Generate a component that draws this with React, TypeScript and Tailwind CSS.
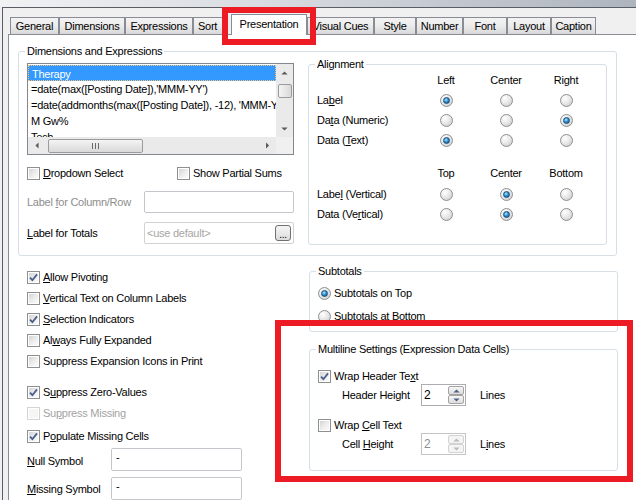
import React from 'react';

const grp = 'border-[#d5dfe5]';

function CheckBox({ checked = false, disabled = false }: { checked?: boolean; disabled?: boolean }) {
  return (
    <span
      className={`relative flex h-[13px] w-[13px] shrink-0 items-center justify-center border bg-white p-px ${
        disabled ? 'border-[#d4d4d4]' : 'border-[#8e8f8f]'
      }`}
    >
      <span
        className={`block h-full w-full ${
          disabled ? 'bg-[#f6f6f6]' : 'bg-gradient-to-br from-[#d4d4d4] via-[#ececec] to-[#fbfbfb]'
        }`}
      />
      {checked && (
        <svg viewBox="0 0 11 11" className="absolute left-0 top-0 h-[11px] w-[11px]">
          <path d="M2 5.6 L4.4 8.2 L9 2.4" fill="none" stroke="#4b5d8f" strokeWidth="1.8" />
        </svg>
      )}
    </span>
  );
}

function Radio({ on = false }: { on?: boolean }) {
  return (
    <span className="flex h-[13px] w-[13px] shrink-0 items-center justify-center rounded-full border border-[#8e8f8f] bg-[radial-gradient(circle_at_35%_30%,#ffffff,#e9e9e9_45%,#c6c6c6)]">
      {on && (
        <span className="h-[7px] w-[7px] rounded-full border border-[#1b4b78] bg-[radial-gradient(circle_at_40%_35%,#b4ecff,#2d93d8_45%,#0a4a80)]" />
      )}
    </span>
  );
}

function CheckRow({
  children,
  checked,
  disabled,
  className = '',
}: {
  children: React.ReactNode;
  checked?: boolean;
  disabled?: boolean;
  className?: string;
}) {
  return (
    <div className={`flex items-center gap-[3px] ${className}`}>
      <CheckBox checked={checked} disabled={disabled} />
      <span className={disabled ? 'text-[#a3a3a3]' : ''}>{children}</span>
    </div>
  );
}

function Arrow({ dir, color = '#5a5a5a' }: { dir: 'up' | 'down' | 'left' | 'right'; color?: string }) {
  const d = {
    up: 'M0 4 L3.5 0.5 L7 4 Z',
    down: 'M0 0.5 L3.5 4 L7 0.5 Z',
    left: 'M4 0 L0.5 3.5 L4 7 Z',
    right: 'M0 0 L3.5 3.5 L0 7 Z',
  }[dir];
  const vert = dir === 'up' || dir === 'down';
  return (
    <svg viewBox={vert ? '0 0 7 4.5' : '0 0 4.5 7'} className={vert ? 'h-[4px] w-[7px]' : 'h-[7px] w-[4px]'}>
      <path d={d} fill={color} />
    </svg>
  );
}

function Spin({ disabled = false }: { disabled?: boolean }) {
  const btn = `flex flex-1 items-center justify-center rounded-[2px] border ${
    disabled ? 'border-[#d2d2d2] bg-[#f4f4f4]' : 'border-[#a3a3a3] bg-gradient-to-b from-[#f7f7f7] to-[#dcdcdc]'
  }`;
  const c = disabled ? '#b9b9b9' : '#4d6185';
  return (
    <div className={`flex h-[22px] w-[45px] border bg-white ${disabled ? 'border-[#c4c4c4]' : 'border-[#abadb3]'}`}>
      <span className={`flex-1 pl-[2px] text-[12px] leading-[20px] ${disabled ? 'text-[#8d8d8d]' : ''}`}>2</span>
      <div className="flex w-[17px] flex-col py-px pr-px">
        <div className={btn}>
          <Arrow dir="up" color={c} />
        </div>
        <div className={btn}>
          <Arrow dir="down" color={c} />
        </div>
      </div>
    </div>
  );
}

function ListBox() {
  const rows = [
    'Therapy',
    "=date(max([Posting Date]),'MMM-YY')",
    "=date(addmonths(max([Posting Date]), -12), 'MMM-YY')",
    'M Gw%',
    'Tech',
  ];
  return (
    <div className="mt-[5px] flex h-[92px] w-[267px] flex-col border border-[#828790] bg-white">
      <div className="flex h-[73px]">
        <div className="w-[248px] overflow-hidden pt-px">
          {rows.map((r, i) => (
            <div
              key={r}
              className={`h-[16px] whitespace-nowrap pl-[3px] leading-[16px] ${
                i === 0 ? 'border border-dotted border-[#f3c77f] bg-[#3399ff] pl-[2px] leading-[14px] text-white' : ''
              }`}
            >
              {r}
            </div>
          ))}
        </div>
        <div className="flex w-[17px] flex-col items-center bg-[#eaeaea]">
          <div className="flex h-[17px] w-full items-center justify-center">
            <Arrow dir="up" />
          </div>
          <div className="mt-[3px] h-[14px] w-[14px] rounded-[2px] border border-[#9b9b9b] bg-gradient-to-r from-[#f4f4f4] to-[#d9d9d9]" />
          <div className="flex-1" />
          <div className="flex h-[17px] w-full items-center justify-center">
            <Arrow dir="down" />
          </div>
        </div>
      </div>
      <div className="flex h-[17px]">
        <div className="flex w-[248px] items-center bg-[#eaeaea]">
          <div className="flex h-full w-[17px] items-center justify-center">
            <Arrow dir="left" />
          </div>
          <div className="ml-[3px] flex h-[14px] w-[95px] items-center justify-center gap-[2px] rounded-[2px] border border-[#9b9b9b] bg-gradient-to-b from-[#f4f4f4] to-[#d9d9d9]">
            <span className="h-[6px] w-px bg-[#6b6b6b]" />
            <span className="h-[6px] w-px bg-[#6b6b6b]" />
            <span className="h-[6px] w-px bg-[#6b6b6b]" />
          </div>
          <div className="flex-1" />
          <div className="flex h-full w-[17px] items-center justify-center">
            <Arrow dir="right" />
          </div>
        </div>
        <div className="w-[17px] bg-[#f0f0f0]" />
      </div>
    </div>
  );
}

const alignCols = 'grid grid-cols-[99px_60px_60px_60px] items-center';

function AlignRow({ label, sel }: { label: React.ReactNode; sel: number }) {
  return (
    <div className={`${alignCols} h-[20px]`}>
      <span>{label}</span>
      {[0, 1, 2].map((i) => (
        <span key={i} className="justify-self-center">
          <Radio on={i === sel} />
        </span>
      ))}
    </div>
  );
}

const tabs = [
  { label: 'General', w: 'w-[49px] justify-center' },
  { label: 'Dimensions', w: 'w-[66px] justify-center' },
  { label: 'Expressions', w: 'w-[68px] justify-center' },
  { label: 'Sort', w: 'w-[34px] justify-start pl-[4px]' },
  { label: 'Presentation', w: 'ml-[4px] w-[76px] justify-center', active: true },
  { label: 'Visual Cues', w: 'w-[67px] justify-center' },
  { label: 'Style', w: 'w-[42px] justify-center' },
  { label: 'Number', w: 'w-[47px] justify-center' },
  { label: 'Font', w: 'w-[44px] justify-center' },
  { label: 'Layout', w: 'w-[44px] justify-center' },
  { label: 'Caption', w: 'w-[45px] justify-center' },
];

export default function App() {
  return (
    <div className="relative h-[500px] w-[636px] overflow-hidden bg-[#eef0f3] font-['Liberation_Sans',Arial,sans-serif] text-[11px] tracking-[-0.25px] text-black">
      <div className="h-[7px] bg-gradient-to-r from-[#f1f2f4] via-[#d3d7dd] to-[#aeb4be]" />
      <div className="ml-[2px] flex h-[493px] flex-col border-l border-t border-[#5a5d63] bg-[#f0f0f0] pl-[5px]">
        {/* tab strip */}
        <div className="flex h-[27px] items-end pl-[2px]">
          {tabs.map((t) =>
            t.active ? (
              <div
                key={t.label}
                className={`relative z-10 -mb-px flex h-[21px] ${t.w} items-center border border-b-0 border-[#898c95] bg-white pb-[2px]`}
              >
                {t.label}
              </div>
            ) : (
              <div
                key={t.label}
                className={`flex h-[17px] ${t.w} items-center border border-b-0 border-[#898c95] bg-gradient-to-b from-[#f3f3f3] via-[#ebebeb] to-[#d8d8d8]`}
              >
                {t.label}
              </div>
            ),
          )}
        </div>

        {/* panel */}
        <div className="flex-1 border-l border-t border-[#898c95] bg-white">
          <fieldset className={`ml-[9px] mt-[10px] w-[599px] rounded-[3px] border ${grp}`}>
            <legend className="ml-[6px] px-[2px] leading-[13px]">Dimensions and Expressions</legend>
            <div className="flex items-start pb-[10px] pl-[8px]">
              {/* left column */}
              <div className="w-[267px]">
                <ListBox />
                <div className="mt-[10px] flex h-[16px] items-center">
                  <CheckRow className="w-[150px]">
                    <span className="underline">D</span>ropdown Select
                  </CheckRow>
                  <CheckRow>Show Partial Sums</CheckRow>
                </div>
                <div className="mt-[10px] flex h-[22px] items-center">
                  <span className="w-[117px] text-[#8d8d8d]">
                    Label <span className="underline">f</span>or Column/Row
                  </span>
                  <div className="h-[22px] w-[150px] rounded-[2px] border border-[#c4c6cb] bg-white" />
                </div>
                <div className="mt-[9px] flex h-[22px] items-center">
                  <span className="w-[117px]">
                    <span className="underline">L</span>abel for Totals
                  </span>
                  <div className="flex h-[22px] w-[150px] items-center rounded-[2px] border border-[#d0d2d6] bg-white pl-[2px] pr-[2px]">
                    <span className="flex-1 text-[#a6a6a6]">&lt;use default&gt;</span>
                    <div className="flex h-[16px] w-[16px] items-end justify-center rounded-[3px] border border-[#707070] bg-gradient-to-b from-[#f5f5f5] to-[#dcdcdc] pb-[1px] text-[10px] leading-[8px]">
                      ...
                    </div>
                  </div>
                </div>
              </div>

              {/* alignment */}
              <fieldset className={`ml-[14px] w-[299px] rounded-[3px] border ${grp}`}>
                <legend className="ml-[6px] px-[2px] leading-[13px]">Alignment</legend>
                <div className="pb-[20px] pl-[8px]">
                  <div className={`${alignCols} mt-px h-[14px]`}>
                    <span />
                    <span className="text-center">Left</span>
                    <span className="text-center">Center</span>
                    <span className="text-center">Right</span>
                  </div>
                  <div className="mt-[4px]">
                    <AlignRow
                      sel={0}
                      label={
                        <>
                          La<span className="underline">b</span>el
                        </>
                      }
                    />
                    <AlignRow
                      sel={2}
                      label={
                        <>
                          Da<span className="underline">t</span>a (Numeric)
                        </>
                      }
                    />
                    <AlignRow
                      sel={0}
                      label={
                        <>
                          Data (<span className="underline">T</span>ext)
                        </>
                      }
                    />
                  </div>
                  <div className={`${alignCols} mt-[15px] h-[14px]`}>
                    <span />
                    <span className="text-center">Top</span>
                    <span className="text-center">Center</span>
                    <span className="text-center">Bottom</span>
                  </div>
                  <div className="mt-[5px]">
                    <AlignRow
                      sel={1}
                      label={
                        <>
                          Labe<span className="underline">l</span> (Vertical)
                        </>
                      }
                    />
                    <AlignRow
                      sel={1}
                      label={
                        <>
                          Data (Ve<span className="underline">r</span>tical)
                        </>
                      }
                    />
                  </div>
                </div>
              </fieldset>
            </div>
          </fieldset>

          {/* lower area */}
          <div className="flex">
            <div className="ml-[18px] mt-[11px] w-[281px]">
              <CheckRow checked className="h-[21px]">
                <span className="underline">A</span>llow Pivoting
              </CheckRow>
              <CheckRow className="h-[21px]">
                <span className="underline">V</span>ertical Text on Column Labels
              </CheckRow>
              <CheckRow checked className="h-[21px]">
                <span className="underline">S</span>election Indicators
              </CheckRow>
              <CheckRow className="h-[21px]">
                Al<span className="underline">w</span>ays Fully Expanded
              </CheckRow>
              <CheckRow className="h-[21px]">Suppress Expansion Icons in Print</CheckRow>
              <CheckRow checked className="mt-[10px] h-[21px]">
                S<span className="underline">u</span>ppress Zero-Values
              </CheckRow>
              <CheckRow disabled className="h-[21px]">
                Su<span className="underline">p</span>press Missing
              </CheckRow>
              <CheckRow checked className="mt-[2px] h-[21px]">
                P<span className="underline">o</span>pulate Missing Cells
              </CheckRow>
              <div className="mt-px flex h-[23px] items-center">
                <span className="w-[84px] pt-[4px]">
                  <span className="underline">N</span>ull Symbol
                </span>
                <div className="h-[23px] w-[131px] rounded-[2px] border border-[#c4c6cb] pl-[4px] leading-[16px]">-</div>
              </div>
              <div className="mt-[6px] flex h-[23px] items-center">
                <span className="w-[84px] pt-[2px]">
                  <span className="underline">M</span>issing Symbol
                </span>
                <div className="h-[23px] w-[131px] rounded-[2px] border border-[#c4c6cb] pl-[4px] leading-[16px]">-</div>
              </div>
            </div>

            <div className="ml-[1px] mt-[9px] w-[309px]">
              <fieldset className={`rounded-[3px] border ${grp}`}>
                <legend className="ml-[6px] px-[2px] leading-[13px]">Subtotals</legend>
                <div className="pb-[5px] pl-[8px]">
                  <div className="mt-[5px] flex h-[20px] items-center gap-[3px]">
                    <Radio on />
                    <span>Subtotals on Top</span>
                  </div>
                  <div className="mt-[3px] flex h-[20px] items-center gap-[3px]">
                    <Radio />
                    <span>Subtotals at Bottom</span>
                  </div>
                </div>
              </fieldset>

              <fieldset className={`mt-[11px] rounded-[3px] border ${grp}`}>
                <legend className="ml-[6px] px-[2px] leading-[13px]">Multiline Settings (Expression Data Cells)</legend>
                <div className="pb-[15px] pl-[8px]">
                  <CheckRow checked className="mt-[12px] h-[16px]">
                    Wrap Header Te<span className="underline">x</span>t
                  </CheckRow>
                  <div className="flex h-[22px] items-center pl-[24px]">
                    <span className="w-[79px]">
                      Header Hei<span className="underline">g</span>ht
                    </span>
                    <Spin />
                    <span className="ml-[14px]">Lines</span>
                  </div>
                  <CheckRow className="mt-[11px] h-[16px]">
                    Wrap <span className="underline">C</span>ell Text
                  </CheckRow>
                  <div className="flex h-[22px] items-center pl-[24px]">
                    <span className="w-[79px]">
                      Cell <span className="underline">H</span>eight
                    </span>
                    <Spin disabled />
                    <span className="ml-[14px]">
                      L<span className="underline">i</span>nes
                    </span>
                  </div>
                </div>
              </fieldset>
            </div>
          </div>
        </div>
      </div>

      {/* red highlight boxes */}
      <div className="pointer-events-none absolute left-[222px] top-[7px] h-[38px] w-[94px] border-[6px] border-[#ed1c24]" />
      <div className="pointer-events-none absolute left-[275px] top-[320px] h-[162px] w-[358px] border-[6px] border-[#ed1c24]" />
    </div>
  );
}
